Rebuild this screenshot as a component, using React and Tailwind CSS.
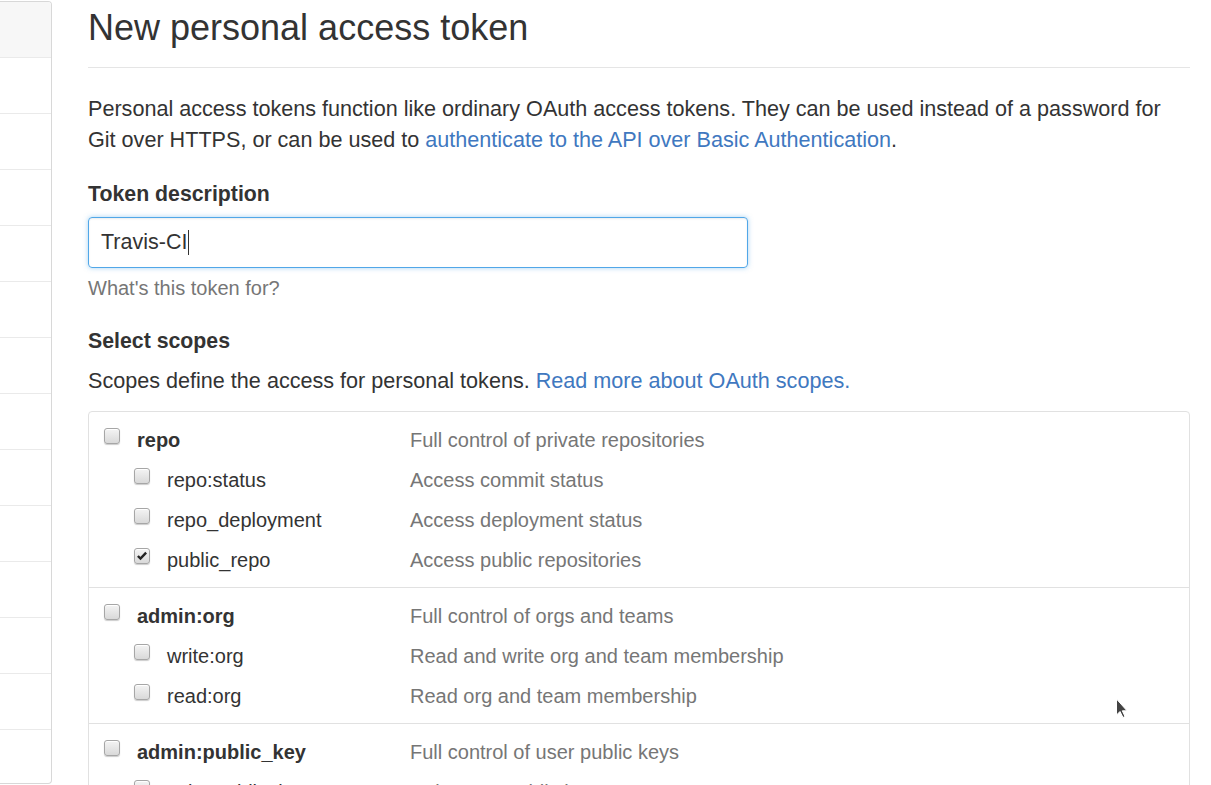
import React from 'react';

const font = { fontFamily: '"Liberation Sans", Arial, sans-serif' };

const groups = [
  {
    name: 'repo',
    desc: 'Full control of private repositories',
    children: [
      { name: 'repo:status', desc: 'Access commit status' },
      { name: 'repo_deployment', desc: 'Access deployment status' },
      { name: 'public_repo', desc: 'Access public repositories', checked: true },
    ],
  },
  {
    name: 'admin:org',
    desc: 'Full control of orgs and teams',
    children: [
      { name: 'write:org', desc: 'Read and write org and team membership' },
      { name: 'read:org', desc: 'Read org and team membership' },
    ],
  },
  {
    name: 'admin:public_key',
    desc: 'Full control of user public keys',
    children: [
      { name: 'write:public_key', desc: 'Write user public keys' },
      { name: 'read:public_key', desc: 'Read user public keys' },
    ],
  },
];

function Checkbox({ checked }) {
  return (
    <span className="relative mt-[-8px] inline-block h-[16px] w-[16px] shrink-0 rounded-[3px] border border-[#a6a6a6] bg-gradient-to-b from-[#f4f4f4] to-[#d9d9d9] shadow-[0_1px_1px_rgba(0,0,0,0.2),inset_0_1px_0_#fff]">
      {checked && (
        <svg viewBox="0 0 16 16" className="absolute left-[1px] top-[1px] h-[12px] w-[12px]">
          <path d="M2.5 8 L6 11.5 L13.5 3.5" fill="none" stroke="#222" strokeWidth="3.2" />
        </svg>
      )}
    </span>
  );
}

function ScopeRow({ name, desc, checked, child }) {
  return (
    <div className="flex h-10 items-center text-[20px]">
      <div className={`flex w-[306px] items-center ${child ? 'pl-[45px]' : 'pl-[15px]'}`}>
        <Checkbox checked={checked} />
        <span className={`ml-[17px] text-[#333] ${child ? '' : 'font-bold'}`}>{name}</span>
      </div>
      <span className="ml-[15px] text-[#767676]">{desc}</span>
    </div>
  );
}

export default function App() {
  return (
    <div className="relative flex h-[785px] overflow-hidden bg-white text-[21.6px] text-[#333]" style={font}>
      {/* sidebar menu */}
      <div className="mt-[1px] h-[783px] w-[52px] shrink-0 overflow-hidden rounded-r-[4px] border-y border-r border-[#d8d8d8]">
        <div className="h-[55px] bg-[#f7f7f7]" />
        {Array.from({ length: 13 }).map((_, i) => (
          <div key={i} className="h-[56px] border-t border-[#eaeaea]" />
        ))}
      </div>

      <div className="ml-9 w-[1102px] shrink-0">
        <h2 className="border-b border-[#e5e5e5] pb-[14px] pt-[3px] text-[36px] leading-[50px] font-normal text-[#333]">
          New personal access token
        </h2>

        <p className="mt-[25px] leading-[31px]">
          Personal access tokens function like ordinary OAuth access tokens. They can be used instead of a password for
          Git over HTTPS, or can be used to{' '}
          <a className="text-[#4078c0]">authenticate to the API over Basic Authentication</a>.
        </p>

        <div className="mt-[25px] text-[21.3px] font-bold leading-[28px]">Token description</div>
        <div className="mt-[9px] flex h-[51px] w-[660px] items-center rounded-[4px] border border-[#51a7e8] px-3 text-[21.5px] shadow-[inset_0_1px_2px_rgba(0,0,0,0.075),0_0_5px_rgba(81,167,232,0.5)]">
          <span>Travis-CI</span>
          <span className="ml-[1px] inline-block h-[25px] w-[1px] bg-[#333]" />
        </div>
        <div className="mt-[6px] text-[20px] leading-[28px] text-[#767676]">What's this token for?</div>

        <div className="mt-[25px] text-[21.3px] font-bold leading-[28px]">Select scopes</div>
        <div className="mt-[12px] leading-[28px]">
          Scopes define the access for personal tokens.{' '}
          <a className="text-[#4078c0]">Read more about OAuth scopes.</a>
        </div>

        <div className="mt-[16px] rounded-[4px] border border-[#e1e1e1]">
          {groups.map((g, i) => (
            <div key={g.name} className={`pt-[8px] pb-[7px] ${i > 0 ? 'border-t border-[#e1e1e1]' : ''}`}>
              <ScopeRow name={g.name} desc={g.desc} />
              {g.children.map((c) => (
                <ScopeRow key={c.name} name={c.name} desc={c.desc} checked={c.checked} child />
              ))}
            </div>
          ))}
        </div>
      </div>

      {/* mouse pointer */}
      <svg viewBox="0 0 14 22" className="absolute left-[1115px] top-[698px] h-[22px] w-[14px]">
        <path d="M1.5 1 L1.5 17 L5 13.5 L8 19.5 L10 18.5 L7.3 12.8 L12 12.8 Z" fill="#444" stroke="#fff" strokeWidth="1" />
      </svg>
    </div>
  );
}
